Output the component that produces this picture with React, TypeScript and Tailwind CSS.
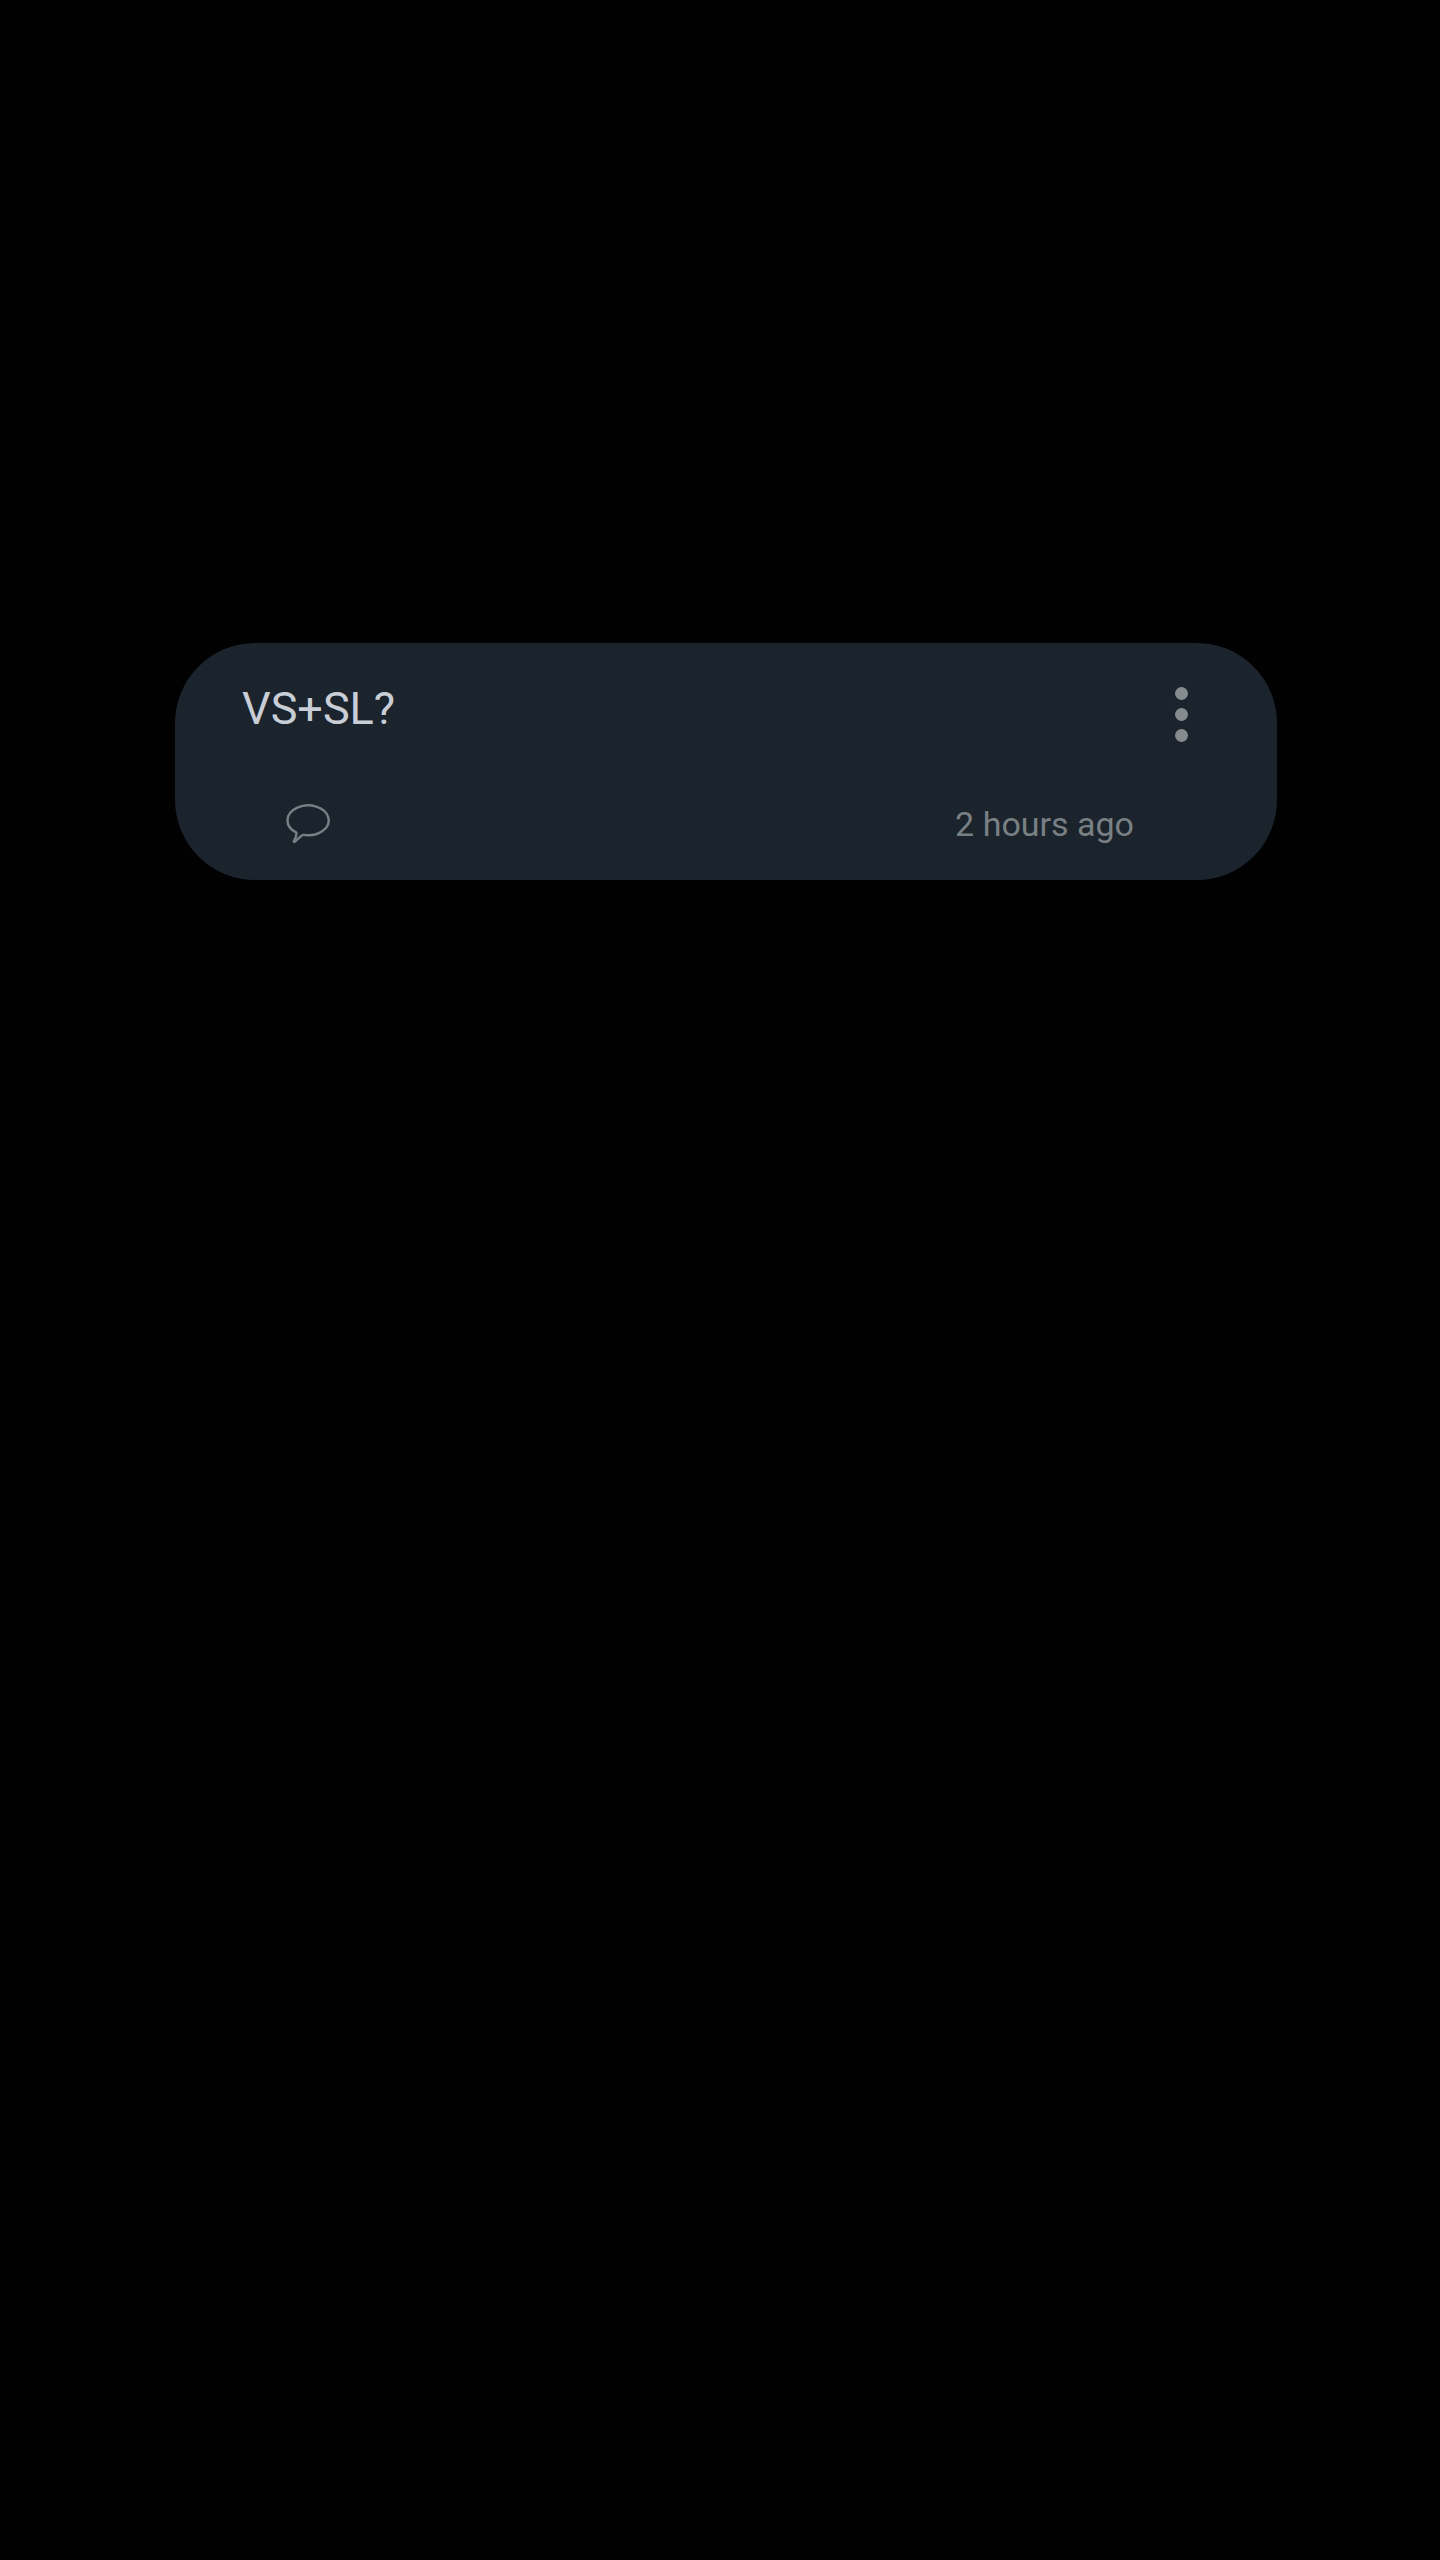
function CommentIcon() {
  return (
    <svg width="44" height="40" viewBox="0 0 44 40" fill="none" aria-hidden="true">
      <path
        d="M10.4 28.6A20.6 14.9 0 1 1 17.8 30.9Q16.6 30.8 15.6 31.7L9.2 37.4Q7.2 38.6 8 36.8Q10.8 32 10.4 28.6Z"
        stroke="currentColor"
        strokeWidth="2.4"
        strokeLinejoin="round"
      />
    </svg>
  );
}

export default function App() {
  return (
    <main className="min-h-screen bg-[#010102] pt-[643px] pr-[163px] pl-[175px] font-['Roboto',sans-serif]">
      <article className="rounded-[80px] bg-[#1b232d] pt-9 pr-[88px] pb-8 pl-[67px]">
        <header className="flex items-start justify-between">
          <h1 className="text-[45px] leading-[60px] text-[#c9ced6]">VS+SL?</h1>
          <button
            type="button"
            aria-label="More options"
            className="flex w-4 flex-col items-center gap-2 py-2 text-[#858b8e]"
          >
            <span className="size-[13px] rounded-full bg-current" />
            <span className="size-[13px] rounded-full bg-current" />
            <span className="size-[13px] rounded-full bg-current" />
          </button>
        </header>
        <footer className="mt-[50px] flex items-center justify-between pr-[55px] pl-11 text-[#798084]">
          <button type="button" aria-label="Comments">
            <CommentIcon />
          </button>
          <time className="text-[34px] leading-[48px]">2 hours ago</time>
        </footer>
      </article>
    </main>
  );
}
